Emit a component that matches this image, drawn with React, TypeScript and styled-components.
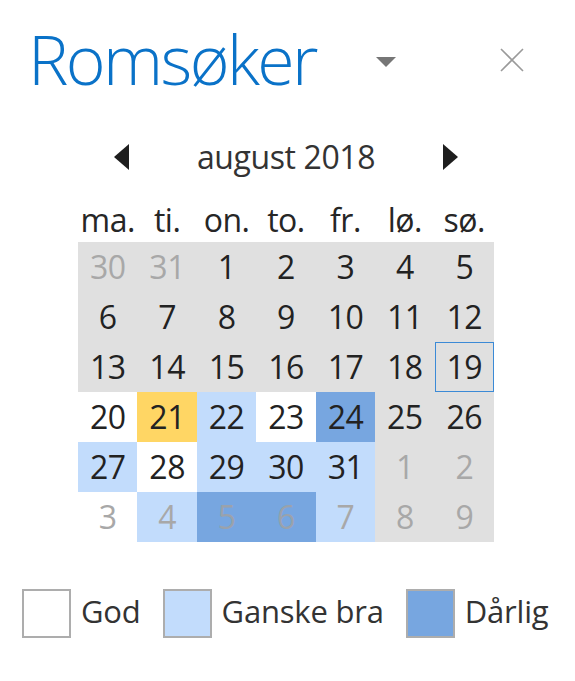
import React from "react";
import styled, { createGlobalStyle } from "styled-components";

const Global = createGlobalStyle`
  html, body { margin: 0; padding: 0; background: #ffffff; }
  body { font-family: "Open Sans", "Noto Sans", sans-serif; }
`;

const Page = styled.div`
  width: 575px;
  height: 681px;
  background: #fff;
  overflow: hidden;
`;

const Header = styled.div`
  display: flex;
  align-items: flex-start;
  height: 132px;
`;

const Title = styled.h1`
  margin: 25px 0 0 28px;
  font-weight: 300;
  font-size: 68px;
  line-height: 68px;
  color: #0a72c8;
  letter-spacing: -2.6px;
`;

const Caret = styled.div`
  margin: 57px 0 0 auto;
  width: 0;
  height: 0;
  border-left: 10.5px solid transparent;
  border-right: 10.5px solid transparent;
  border-top: 10px solid #767676;
`;

const CloseBtn = styled.div`
  margin: 48px 51px 0 104px;
  width: 24px;
  height: 24px;
  display: flex;
`;

const Calendar = styled.div`
  margin-left: 78px;
  width: 416px;
`;

const Nav = styled.div`
  display: flex;
  align-items: center;
  justify-content: space-between;
  height: 50px;
  padding: 0 36px;
`;

const Arrow = styled.div<{ $dir: "left" | "right" }>`
  width: 0;
  height: 0;
  border-top: 13px solid transparent;
  border-bottom: 13px solid transparent;
  ${(p) =>
    p.$dir === "left"
      ? "border-right: 15px solid #1e1e1e;"
      : "border-left: 15px solid #1e1e1e;"}
  margin-top: -1px;
`;

const Month = styled.div`
  font-size: 32px;
  line-height: 50px;
  color: #333;
  letter-spacing: -0.4px;
`;

const Week = styled.div`
  display: grid;
  grid-template-columns: repeat(7, 1fr);
  height: 60px;
  box-sizing: border-box;
  padding-top: 13px;
`;

const WeekDay = styled.div`
  text-align: center;
  font-size: 32px;
  line-height: 50px;
  color: #262626;
  letter-spacing: -0.5px;
`;

const Grid = styled.div`
  display: grid;
  grid-template-columns: repeat(7, 1fr);
  grid-auto-rows: 50px;
`;

type Tone = "gray" | "white" | "yellow" | "light" | "dark";

const bg: Record<Tone, string> = {
  gray: "#e0e0e0",
  white: "#ffffff",
  yellow: "#ffd664",
  light: "#c2dcfc",
  dark: "#77a6e0",
};

const Cell = styled.div<{ $tone: Tone; $other?: boolean; $today?: boolean }>`
  background: ${(p) => bg[p.$tone]};
  color: ${(p) => (p.$other ? (p.$tone === "dark" ? "#9aa2ac" : "#a8a8a8") : "#222")};
  text-align: center;
  font-size: 32px;
  line-height: 50px;
  letter-spacing: -0.5px;
  box-shadow: ${(p) => (p.$today ? "inset 0 0 0 1px #3b8ad6" : "none")};
`;

const Legend = styled.div`
  display: flex;
  align-items: flex-start;
  margin: 47px 0 0 22px;
`;

const Swatch = styled.div<{ $tone: Tone }>`
  width: 49px;
  height: 49px;
  box-sizing: border-box;
  border: 2px solid #adadad;
  background: ${(p) => bg[p.$tone]};
  flex: none;
`;

const Label = styled.div<{ $last?: boolean }>`
  margin: 0 ${(p) => (p.$last ? 0 : 22)}px 0 10px;
  font-size: 31px;
  line-height: 44px;
  color: #333;
  letter-spacing: -0.2px;
`;

type Day = { n: number; t: Tone; o?: boolean; today?: boolean };

const rows: Day[][] = [
  [
    { n: 30, t: "gray", o: true },
    { n: 31, t: "gray", o: true },
    { n: 1, t: "gray" },
    { n: 2, t: "gray" },
    { n: 3, t: "gray" },
    { n: 4, t: "gray" },
    { n: 5, t: "gray" },
  ],
  [6, 7, 8, 9, 10, 11, 12].map((n) => ({ n, t: "gray" as Tone })),
  [13, 14, 15, 16, 17, 18].map((n) => ({ n, t: "gray" as Tone })).concat([
    { n: 19, t: "gray", today: true } as Day,
  ]),
  [
    { n: 20, t: "white" },
    { n: 21, t: "yellow" },
    { n: 22, t: "light" },
    { n: 23, t: "white" },
    { n: 24, t: "dark" },
    { n: 25, t: "gray" },
    { n: 26, t: "gray" },
  ],
  [
    { n: 27, t: "light" },
    { n: 28, t: "white" },
    { n: 29, t: "light" },
    { n: 30, t: "light" },
    { n: 31, t: "light" },
    { n: 1, t: "gray", o: true },
    { n: 2, t: "gray", o: true },
  ],
  [
    { n: 3, t: "white", o: true },
    { n: 4, t: "light", o: true },
    { n: 5, t: "dark", o: true },
    { n: 6, t: "dark", o: true },
    { n: 7, t: "light", o: true },
    { n: 8, t: "gray", o: true },
    { n: 9, t: "gray", o: true },
  ],
];

const weekdays = ["ma.", "ti.", "on.", "to.", "fr.", "lø.", "sø."];

export default function App() {
  return (
    <Page>
      <Global />
      <Header>
        <Title>Romsøker</Title>
        <Caret />
        <CloseBtn>
          <svg width="24" height="24" viewBox="0 0 24 24">
            <path d="M1 1 L23 23 M23 1 L1 23" stroke="#9a9a9a" strokeWidth="1.6" fill="none" />
          </svg>
        </CloseBtn>
      </Header>
      <Calendar>
        <Nav>
          <Arrow $dir="left" />
          <Month>august 2018</Month>
          <Arrow $dir="right" />
        </Nav>
        <Week>
          {weekdays.map((w) => (
            <WeekDay key={w}>{w}</WeekDay>
          ))}
        </Week>
        <Grid>
          {rows.flat().map((d, i) => (
            <Cell key={i} $tone={d.t} $other={d.o} $today={d.today}>
              {d.n}
            </Cell>
          ))}
        </Grid>
      </Calendar>
      <Legend>
        <Swatch $tone="white" />
        <Label>God</Label>
        <Swatch $tone="light" />
        <Label>Ganske bra</Label>
        <Swatch $tone="dark" />
        <Label $last>Dårlig</Label>
      </Legend>
    </Page>
  );
}
